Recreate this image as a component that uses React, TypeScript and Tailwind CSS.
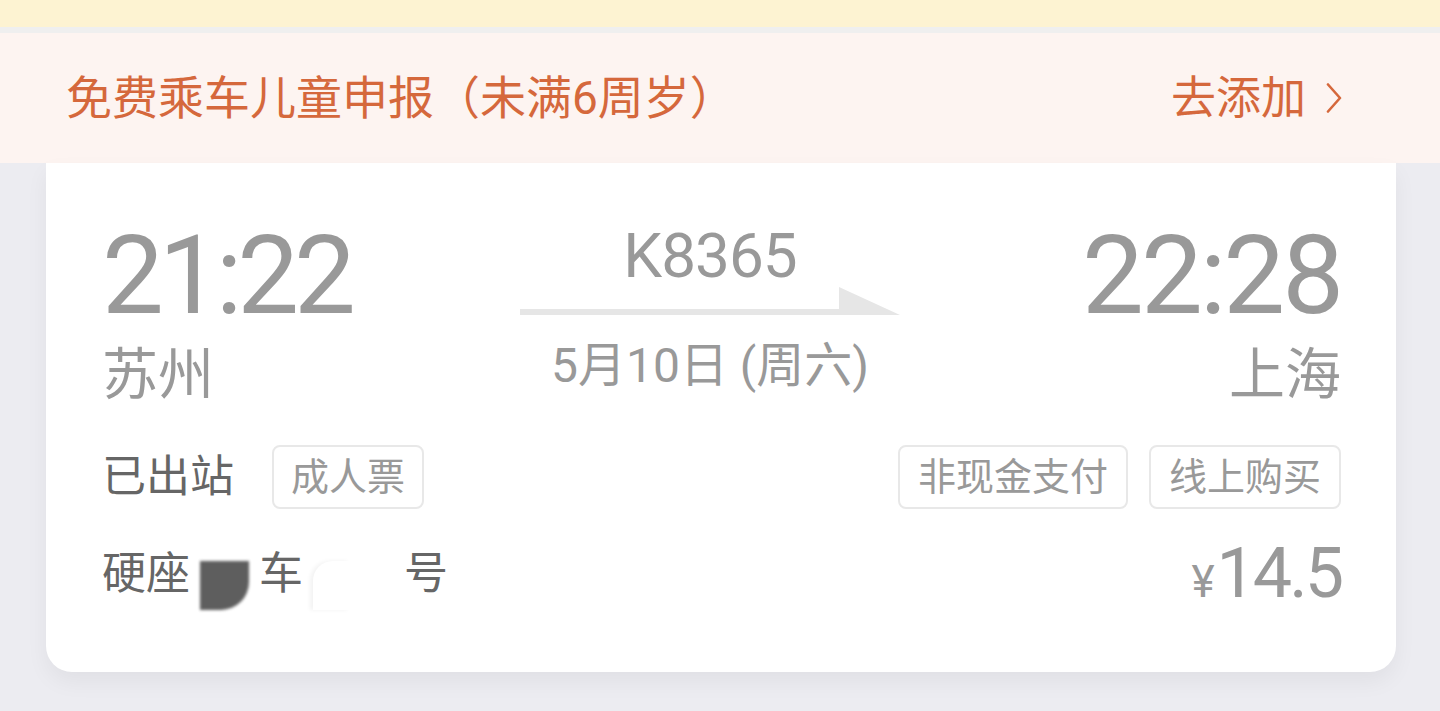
export default function App() {
  return (
    <div className="h-[711px] w-[1440px] overflow-hidden bg-[#ececf1] font-['Roboto','Noto_Sans_CJK_SC',sans-serif]">
      {/* top strips */}
      <div className="h-[27px] bg-[#fdf3d2]" />
      <div className="h-[6px] bg-[#efefef]" />

      {/* child ticket notice */}
      <div className="flex h-[130px] items-center justify-between bg-[#fdf4f1] pl-[66px] pr-[98px] text-[46px] leading-none text-[#d5683c]">
        <span>免费乘车儿童申报（未满6周岁）</span>
        <span className="flex items-center gap-[20px] text-[45px]">
          去添加
          <svg width="16" height="30" viewBox="0 0 16 30" fill="none">
            <polyline points="2,1.5 14,15 2,28.5" stroke="#d5683c" strokeWidth="2.6" strokeLinecap="round" strokeLinejoin="round" />
          </svg>
        </span>
      </div>

      {/* ticket card */}
      <div className="ml-[46px] mr-[44px] rounded-b-[26px] bg-white pb-[62px] pl-[56px] pr-[55px] pt-[58px] shadow-[0_10px_22px_rgba(0,0,0,0.05)]">
        <div className="flex">
          <div className="flex w-[418px] flex-col items-start">
            <div className="text-[110px] leading-none tracking-[-5px] text-[#999]">21:22</div>
            <div className="mt-[16px] text-[56px] leading-none text-[#999]">苏州</div>
          </div>
          <div className="flex w-[380px] flex-col items-center">
            <div className="mt-[4px] text-[62px] leading-none tracking-[-1px] text-[#999]">K8365</div>
            <svg width="380" height="29" viewBox="0 0 380 29" className="block">
              <polygon points="0,22 319,22 319,0 380,28 0,28" fill="#e6e6e6" />
            </svg>
            <div className="mt-[26px] text-[48px] leading-none text-[#999]">5月10日 (周六)</div>
          </div>
          <div className="flex flex-1 flex-col items-end">
            <div className="text-[110px] leading-none tracking-[-3px] text-[#999]">22:28</div>
            <div className="mt-[16px] text-[56px] leading-none text-[#999]">上海</div>
          </div>
        </div>

        <div className="mt-[42px] flex items-center justify-between">
          <div className="flex items-center">
            <span className="text-[44px] leading-none text-[#666]">已出站</span>
            <span className="ml-[38px] flex h-[64px] items-center rounded-[8px] border-2 border-[#e8e8e8] px-[17px] text-[38px] leading-none text-[#999]">成人票</span>
          </div>
          <div className="flex items-center gap-[21px]">
            <span className="flex h-[64px] items-center rounded-[8px] border-2 border-[#e8e8e8] px-[18px] text-[38px] leading-none text-[#999]">非现金支付</span>
            <span className="flex h-[64px] items-center rounded-[8px] border-2 border-[#e8e8e8] px-[18px] text-[38px] leading-none text-[#999]">线上购买</span>
          </div>
        </div>

        <div className="mt-[29px] flex items-start justify-between">
          <div className="mt-[14px] flex items-start text-[44px] leading-none text-[#666]">
            <span>硬座</span>
            <span className="ml-[10px] mt-[9px] h-[49px] w-[49px] rounded-br-[28px] bg-[#5e5e5e] blur-[1.5px]" />
            <span className="ml-[10px]">车</span>
            <span className="ml-[10px] mt-[9px] h-[49px] w-[37px] rounded-tl-[20px] shadow-[-3px_0_4px_rgba(0,0,0,0.05)]" />
            <span className="ml-[54px]">号</span>
          </div>
          <div className="flex items-baseline leading-none text-[#999]">
            <span className="mr-[2px] text-[44px]">¥</span>
            <span className="text-[70px] tracking-[-3px]">14.5</span>
          </div>
        </div>
      </div>
    </div>
  );
}
